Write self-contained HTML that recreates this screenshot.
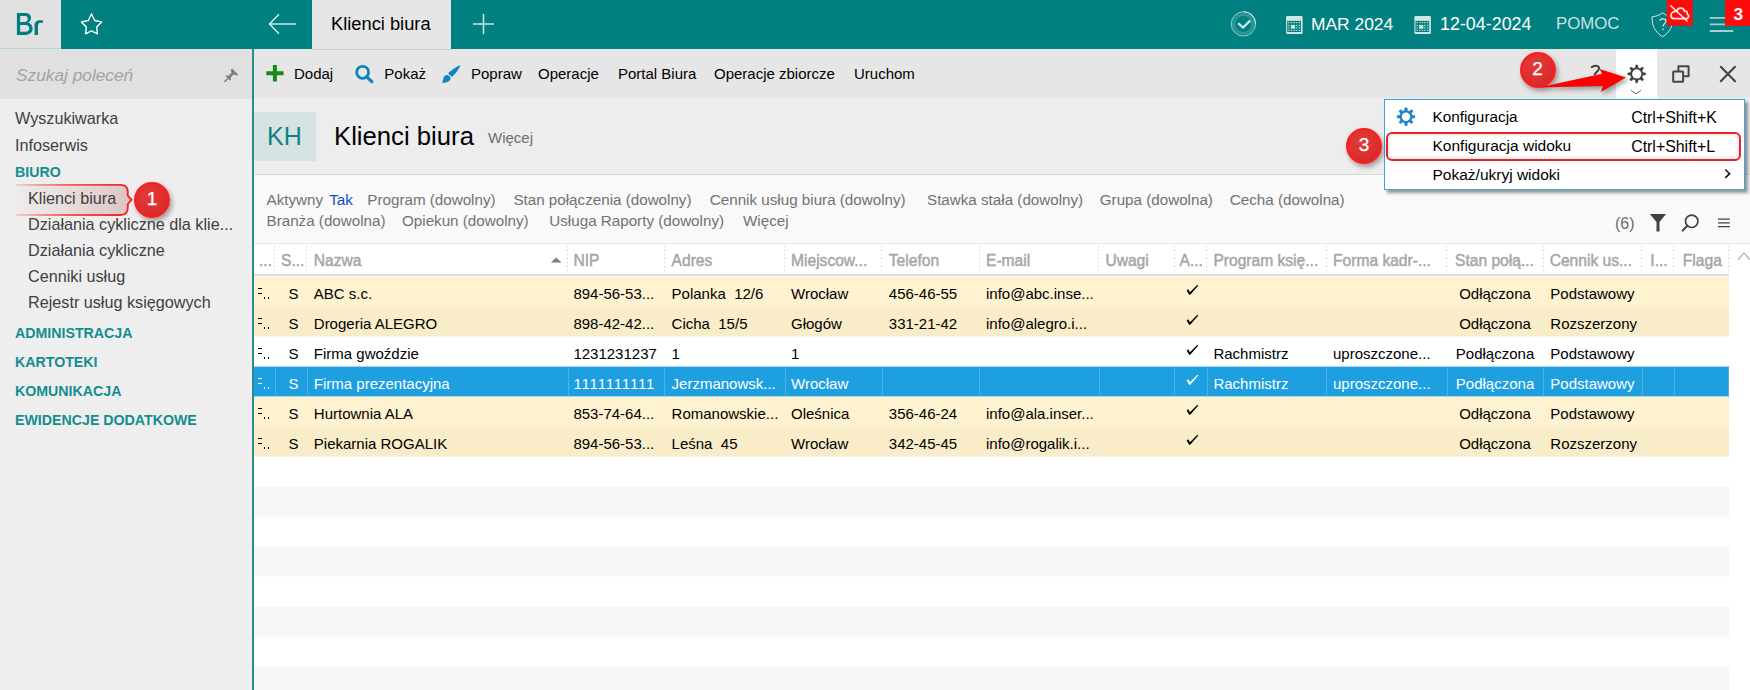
<!DOCTYPE html>
<html><head><meta charset="utf-8">
<style>
*{margin:0;padding:0;box-sizing:border-box}
html,body{width:1750px;height:690px;overflow:hidden;background:#fff;font-family:"Liberation Sans",sans-serif}
.a{position:absolute}
.t{position:absolute;white-space:nowrap;line-height:1}
svg{position:absolute;overflow:visible}
</style></head><body>
<div class="a" style="left:0;top:0;width:1750px;height:49px;background:#008080"></div>
<div class="a" style="left:0;top:0;width:61px;height:48px;background:#e1e1e1"></div>
<div class="a" style="left:0;top:48px;width:61px;height:1px;background:#b9d6d6"></div>
<div class="a" style="left:312px;top:0;width:139px;height:49px;background:#e6e6e6"></div>
<svg style="left:0;top:0" width="61" height="49"><path fill-rule="evenodd" fill="#007f80" d="M16.9,12.9 H25.3 C29.3,12.9 31,15.2 31,17.6 C31,20 29.9,21.6 28.2,22.6 C31,23.5 32.6,25.5 32.6,28.6 C32.6,32.5 29.8,34.9 25.6,34.9 H16.9 Z M20.15,16 H25 C27,16 27.8,17.1 27.8,18.8 C27.8,20.6 26.8,21.9 25,21.9 H20.15 Z M20.15,24.9 H25.6 C28,24.9 29.3,26.2 29.3,28.3 C29.3,30.6 28,31.8 25.6,31.8 H20.15 Z M34.5,34.9 V25 C34.5,22 36.8,20.2 40,20.2 L42,20.2 C42.8,20.2 43.1,20.7 43.1,21.5 C43.1,22.3 42.8,22.8 42,22.8 L40.5,22.8 C38.8,22.8 38,24 38,25.8 V34.9 Z"/></svg>
<svg style="left:0;top:0" width="1750" height="49">
  <polygon points="91.5,14 94.7,20.5 101.6,21.9 96.7,27 97.4,33.8 91.5,30.8 85.6,33.8 86.3,27 81.4,21.9 88.3,20.5" fill="none" stroke="#fff" stroke-width="1.4" stroke-linejoin="round"/>
  <path d="M279,14.3 L269.5,24 L279,33.7 M269.5,24 H296" fill="none" stroke="#cbe5e5" stroke-width="1.6"/>
  <path d="M473,24 H494 M483.5,14 V34.3" fill="none" stroke="#cbe5e5" stroke-width="1.5"/>
</svg>
<div class="t" style="left:331px;top:14.51px;font-size:18.3px;color:#000;">Klienci biura</div>
<div class="t" style="left:1311px;top:16.27px;font-size:17.4px;color:#ffffff;">MAR 2024</div>
<div class="t" style="left:1440px;top:15.85px;font-size:17.9px;color:#ffffff;">12-04-2024</div>
<div class="t" style="left:1556px;top:15.58px;font-size:16.8px;color:#c8e2e2;">POMOC</div>
<div class="a" style="left:0;top:49px;width:252px;height:641px;background:#eeeeee"></div>
<div class="a" style="left:0;top:49px;width:252px;height:50px;background:#e0e0e0"></div>
<div class="a" style="left:252px;top:49px;width:2px;height:641px;background:#2a8c8c"></div>
<div class="t" style="left:16px;top:67.36px;font-size:17.3px;color:#a3a3a3;font-style:italic">Szukaj poleceń</div>
<div class="t" style="left:15px;top:109.79px;font-size:16.2px;color:#404040;">Wyszukiwarka</div>
<div class="t" style="left:15px;top:136.79px;font-size:16.2px;color:#404040;">Infoserwis</div>
<div class="t" style="left:15px;top:165.48px;font-size:14.2px;color:#138e8f;font-weight:bold">BIURO</div>
<div class="t" style="left:28px;top:216.29px;font-size:16.2px;color:#404040;">Działania cykliczne dla klie...</div>
<div class="t" style="left:28px;top:242.29px;font-size:16.2px;color:#404040;">Działania cykliczne</div>
<div class="t" style="left:28px;top:268.29px;font-size:16.2px;color:#404040;">Cenniki usług</div>
<div class="t" style="left:28px;top:294.29px;font-size:16.2px;color:#404040;">Rejestr usług księgowych</div>
<div class="t" style="left:15px;top:326.48px;font-size:14.2px;color:#138e8f;font-weight:bold">ADMINISTRACJA</div>
<div class="t" style="left:15px;top:355.48px;font-size:14.2px;color:#138e8f;font-weight:bold">KARTOTEKI</div>
<div class="t" style="left:15px;top:383.98px;font-size:14.2px;color:#138e8f;font-weight:bold">KOMUNIKACJA</div>
<div class="t" style="left:15px;top:412.98px;font-size:14.2px;color:#138e8f;font-weight:bold">EWIDENCJE DODATKOWE</div>
<div class="a" style="left:254px;top:49px;width:1496px;height:49px;background:#e6e6e6"></div>
<div class="a" style="left:1616px;top:49px;width:41px;height:49px;background:#ffffff"></div>
<div class="a" style="left:312px;top:49px;width:139px;height:1px;background:#c6ccc8"></div>
<div class="t" style="left:294px;top:66.30px;font-size:15px;color:#000;">Dodaj</div>
<div class="t" style="left:384.3px;top:66.30px;font-size:15px;color:#000;">Pokaż</div>
<div class="t" style="left:471px;top:66.30px;font-size:15px;color:#000;">Popraw</div>
<div class="t" style="left:538px;top:66.30px;font-size:15px;color:#000;">Operacje</div>
<div class="t" style="left:618px;top:66.30px;font-size:15px;color:#000;">Portal Biura</div>
<div class="t" style="left:714px;top:66.30px;font-size:15px;color:#000;">Operacje zbiorcze</div>
<div class="t" style="left:854px;top:66.30px;font-size:15px;color:#000;">Uruchom</div>
<div class="a" style="left:254px;top:98px;width:1496px;height:76px;background:#ededed"></div>
<div class="a" style="left:254px;top:112px;width:62px;height:49px;background:#d6e3e4"></div>
<div class="a" style="left:254px;top:174px;width:1496px;height:1px;background:#d8d8d8"></div>
<div class="t" style="left:267px;top:123.84px;font-size:25px;color:#0e8283;">KH</div>
<div class="t" style="left:334px;top:124.04px;font-size:25.7px;color:#000;">Klienci biura</div>
<div class="t" style="left:488px;top:130.30px;font-size:15px;color:#6e6e6e;">Więcej</div>
<div class="a" style="left:254px;top:175px;width:1496px;height:68px;background:#f9f9f9"></div>
<div class="a" style="left:254px;top:243px;width:1496px;height:1px;background:#e6e6e6"></div>
<div class="t" style="left:266.5px;top:191.53px;font-size:15.2px;color:#727272;">Aktywny</div>
<div class="t" style="left:329.2px;top:191.53px;font-size:15.2px;color:#0c50c2;">Tak</div>
<div class="t" style="left:367.3px;top:191.53px;font-size:15.2px;color:#727272;">Program (dowolny)</div>
<div class="t" style="left:513.4px;top:191.53px;font-size:15.2px;color:#727272;">Stan połączenia (dowolny)</div>
<div class="t" style="left:709.8px;top:191.53px;font-size:15.2px;color:#727272;">Cennik usług biura (dowolny)</div>
<div class="t" style="left:927px;top:191.53px;font-size:15.2px;color:#727272;">Stawka stała (dowolny)</div>
<div class="t" style="left:1099.8px;top:191.53px;font-size:15.2px;color:#727272;">Grupa (dowolna)</div>
<div class="t" style="left:1229.8px;top:191.53px;font-size:15.2px;color:#727272;">Cecha (dowolna)</div>
<div class="t" style="left:266.5px;top:212.53px;font-size:15.2px;color:#727272;">Branża (dowolna)</div>
<div class="t" style="left:402px;top:212.53px;font-size:15.2px;color:#727272;">Opiekun (dowolny)</div>
<div class="t" style="left:549.3px;top:212.53px;font-size:15.2px;color:#727272;">Usługa Raporty (dowolny)</div>
<div class="t" style="left:743px;top:212.53px;font-size:15.2px;color:#727272;">Więcej</div>
<div class="t" style="left:1615px;top:215.96px;font-size:16px;color:#6b6b6b;">(6)</div>
<div class="a" style="left:254px;top:244px;width:1496px;height:446px;background:#ffffff"></div>
<div class="a" style="left:254px;top:274px;width:1475px;height:2px;background:#dedede"></div>
<svg style="left:0;top:0" width="1750" height="690"><rect x="254" y="276.6" width="1475" height="30" fill="#fff2d0"/><rect x="254" y="306.6" width="1475" height="30" fill="#f9ecc8"/><rect x="254" y="336.6" width="1475" height="30" fill="#ffffff"/><rect x="254" y="366.6" width="1475" height="30" fill="#1e9fe0"/><rect x="254" y="396.6" width="1475" height="30" fill="#fff2d0"/><rect x="254" y="426.6" width="1475" height="30" fill="#f9ecc8"/><rect x="254" y="486.6" width="1475" height="30" fill="#f7f7f7"/><rect x="254" y="546.6" width="1475" height="30" fill="#f7f7f7"/><rect x="254" y="606.6" width="1475" height="30" fill="#f7f7f7"/><rect x="254" y="666.6" width="1475" height="30" fill="#f7f7f7"/></svg>
<div class="a" style="left:274px;top:246px;width:1px;height:28px;background:repeating-linear-gradient(180deg,#c4c4c4 0,#c4c4c4 1px,transparent 1px,transparent 4px)"></div>
<div class="a" style="left:306px;top:246px;width:1px;height:28px;background:repeating-linear-gradient(180deg,#c4c4c4 0,#c4c4c4 1px,transparent 1px,transparent 4px)"></div>
<div class="a" style="left:567px;top:246px;width:1px;height:28px;background:repeating-linear-gradient(180deg,#c4c4c4 0,#c4c4c4 1px,transparent 1px,transparent 4px)"></div>
<div class="a" style="left:664px;top:246px;width:1px;height:28px;background:repeating-linear-gradient(180deg,#c4c4c4 0,#c4c4c4 1px,transparent 1px,transparent 4px)"></div>
<div class="a" style="left:784px;top:246px;width:1px;height:28px;background:repeating-linear-gradient(180deg,#c4c4c4 0,#c4c4c4 1px,transparent 1px,transparent 4px)"></div>
<div class="a" style="left:881px;top:246px;width:1px;height:28px;background:repeating-linear-gradient(180deg,#c4c4c4 0,#c4c4c4 1px,transparent 1px,transparent 4px)"></div>
<div class="a" style="left:979px;top:246px;width:1px;height:28px;background:repeating-linear-gradient(180deg,#c4c4c4 0,#c4c4c4 1px,transparent 1px,transparent 4px)"></div>
<div class="a" style="left:1098px;top:246px;width:1px;height:28px;background:repeating-linear-gradient(180deg,#c4c4c4 0,#c4c4c4 1px,transparent 1px,transparent 4px)"></div>
<div class="a" style="left:1174px;top:246px;width:1px;height:28px;background:repeating-linear-gradient(180deg,#c4c4c4 0,#c4c4c4 1px,transparent 1px,transparent 4px)"></div>
<div class="a" style="left:1206px;top:246px;width:1px;height:28px;background:repeating-linear-gradient(180deg,#c4c4c4 0,#c4c4c4 1px,transparent 1px,transparent 4px)"></div>
<div class="a" style="left:1326px;top:246px;width:1px;height:28px;background:repeating-linear-gradient(180deg,#c4c4c4 0,#c4c4c4 1px,transparent 1px,transparent 4px)"></div>
<div class="a" style="left:1446px;top:246px;width:1px;height:28px;background:repeating-linear-gradient(180deg,#c4c4c4 0,#c4c4c4 1px,transparent 1px,transparent 4px)"></div>
<div class="a" style="left:1543px;top:246px;width:1px;height:28px;background:repeating-linear-gradient(180deg,#c4c4c4 0,#c4c4c4 1px,transparent 1px,transparent 4px)"></div>
<div class="a" style="left:1641px;top:246px;width:1px;height:28px;background:repeating-linear-gradient(180deg,#c4c4c4 0,#c4c4c4 1px,transparent 1px,transparent 4px)"></div>
<div class="a" style="left:1673px;top:246px;width:1px;height:28px;background:repeating-linear-gradient(180deg,#c4c4c4 0,#c4c4c4 1px,transparent 1px,transparent 4px)"></div>
<div class="a" style="left:1728px;top:246px;width:1px;height:28px;background:repeating-linear-gradient(180deg,#c4c4c4 0,#c4c4c4 1px,transparent 1px,transparent 4px)"></div>
<svg style="left:0;top:0" width="1" height="1"><rect x="275" y="366.6" width="1" height="30" fill="#4cb2e8"/></svg>
<svg style="left:0;top:0" width="1" height="1"><rect x="307" y="366.6" width="1" height="30" fill="#4cb2e8"/></svg>
<svg style="left:0;top:0" width="1" height="1"><rect x="568" y="366.6" width="1" height="30" fill="#4cb2e8"/></svg>
<svg style="left:0;top:0" width="1" height="1"><rect x="664" y="366.6" width="1" height="30" fill="#4cb2e8"/></svg>
<svg style="left:0;top:0" width="1" height="1"><rect x="785" y="366.6" width="1" height="30" fill="#4cb2e8"/></svg>
<svg style="left:0;top:0" width="1" height="1"><rect x="882" y="366.6" width="1" height="30" fill="#4cb2e8"/></svg>
<svg style="left:0;top:0" width="1" height="1"><rect x="979" y="366.6" width="1" height="30" fill="#4cb2e8"/></svg>
<svg style="left:0;top:0" width="1" height="1"><rect x="1099" y="366.6" width="1" height="30" fill="#4cb2e8"/></svg>
<svg style="left:0;top:0" width="1" height="1"><rect x="1174" y="366.6" width="1" height="30" fill="#4cb2e8"/></svg>
<svg style="left:0;top:0" width="1" height="1"><rect x="1207" y="366.6" width="1" height="30" fill="#4cb2e8"/></svg>
<svg style="left:0;top:0" width="1" height="1"><rect x="1326" y="366.6" width="1" height="30" fill="#4cb2e8"/></svg>
<svg style="left:0;top:0" width="1" height="1"><rect x="1447" y="366.6" width="1" height="30" fill="#4cb2e8"/></svg>
<svg style="left:0;top:0" width="1" height="1"><rect x="1543" y="366.6" width="1" height="30" fill="#4cb2e8"/></svg>
<svg style="left:0;top:0" width="1" height="1"><rect x="1642" y="366.6" width="1" height="30" fill="#4cb2e8"/></svg>
<svg style="left:0;top:0" width="1" height="1"><rect x="1674" y="366.6" width="1" height="30" fill="#4cb2e8"/></svg>
<svg style="left:0;top:0" width="1" height="1"><rect x="1728" y="366.6" width="1" height="30" fill="#4cb2e8"/></svg>
<div class="t" style="left:259px;top:252.79px;font-size:15.6px;color:#a6a6a6;font-weight:normal;-webkit-text-stroke:0.45px #a6a6a6">...</div>
<div class="t" style="left:281px;top:252.79px;font-size:15.6px;color:#a6a6a6;font-weight:normal;-webkit-text-stroke:0.45px #a6a6a6">S...</div>
<div class="t" style="left:313.8px;top:252.79px;font-size:15.6px;color:#a6a6a6;font-weight:normal;-webkit-text-stroke:0.45px #a6a6a6">Nazwa</div>
<div class="t" style="left:573.4px;top:252.79px;font-size:15.6px;color:#a6a6a6;font-weight:normal;-webkit-text-stroke:0.45px #a6a6a6">NIP</div>
<div class="t" style="left:671.6px;top:252.79px;font-size:15.6px;color:#a6a6a6;font-weight:normal;-webkit-text-stroke:0.45px #a6a6a6">Adres</div>
<div class="t" style="left:791px;top:252.79px;font-size:15.6px;color:#a6a6a6;font-weight:normal;-webkit-text-stroke:0.45px #a6a6a6">Miejscow...</div>
<div class="t" style="left:888.8px;top:252.79px;font-size:15.6px;color:#a6a6a6;font-weight:normal;-webkit-text-stroke:0.45px #a6a6a6">Telefon</div>
<div class="t" style="left:986px;top:252.79px;font-size:15.6px;color:#a6a6a6;font-weight:normal;-webkit-text-stroke:0.45px #a6a6a6">E-mail</div>
<div class="t" style="left:1105.4px;top:252.79px;font-size:15.6px;color:#a6a6a6;font-weight:normal;-webkit-text-stroke:0.45px #a6a6a6">Uwagi</div>
<div class="t" style="left:1179.5px;top:252.79px;font-size:15.6px;color:#a6a6a6;font-weight:normal;-webkit-text-stroke:0.45px #a6a6a6">A...</div>
<div class="t" style="left:1213.4px;top:252.79px;font-size:15.6px;color:#a6a6a6;font-weight:normal;-webkit-text-stroke:0.45px #a6a6a6">Program księ...</div>
<div class="t" style="left:1333px;top:252.79px;font-size:15.6px;color:#a6a6a6;font-weight:normal;-webkit-text-stroke:0.45px #a6a6a6">Forma kadr-...</div>
<div class="t" style="left:1455px;top:252.79px;font-size:15.6px;color:#a6a6a6;font-weight:normal;-webkit-text-stroke:0.45px #a6a6a6">Stan połą...</div>
<div class="t" style="left:1549.7px;top:252.79px;font-size:15.6px;color:#a6a6a6;font-weight:normal;-webkit-text-stroke:0.45px #a6a6a6">Cennik us...</div>
<div class="t" style="left:1650.3px;top:252.79px;font-size:15.6px;color:#a6a6a6;font-weight:normal;-webkit-text-stroke:0.45px #a6a6a6">I...</div>
<div class="t" style="left:1682.8px;top:252.79px;font-size:15.6px;color:#a6a6a6;font-weight:normal;-webkit-text-stroke:0.45px #a6a6a6">Flaga</div>
<svg style="left:0;top:0" width="1" height="1"><polygon points="550.8,262.6 561.6,262.6 556.2,257.6" fill="#808080"/></svg>
<div class="t" style="left:288.6px;top:285.70px;font-size:15px;color:#000000;">S</div>
<div class="t" style="left:313.8px;top:285.70px;font-size:15px;color:#000000;">ABC s.c.</div>
<div class="t" style="left:573.4px;top:285.70px;font-size:15px;color:#000000;">894-56-53...</div>
<div class="t" style="left:671.6px;top:285.70px;font-size:15px;color:#000000;">Polanka&nbsp; 12/6</div>
<div class="t" style="left:791px;top:285.70px;font-size:15px;color:#000000;">Wrocław</div>
<div class="t" style="left:888.8px;top:285.70px;font-size:15px;color:#000000;">456-46-55</div>
<div class="t" style="left:986px;top:285.70px;font-size:15px;color:#000000;">info@abc.inse...</div>
<svg style="left:0;top:0" width="1" height="1"><path d="M1186.7,290.5 L1188.3,289.3 L1189.9,292.2 L1197.4,284.7 L1198.3,285.6 L1190.2,294.7 L1189.1,294.7 Z" transform="translate(0,0)" fill="#000000"/></svg>
<div class="t" style="left:1446.8px;width:96.5px;text-align:center;top:285.70px;font-size:15px;color:#000000">Odłączona</div>
<div class="t" style="left:1550.3px;top:285.70px;font-size:15px;color:#000000;">Podstawowy</div>
<div class="a" style="left:258px;top:288px;width:4px;height:1px;background:#000000"></div>
<div class="a" style="left:258px;top:293px;width:4px;height:1px;background:#000000"></div>
<div class="a" style="left:264px;top:297px;width:1px;height:1.5px;background:#000000"></div>
<div class="a" style="left:268px;top:297px;width:1px;height:1.5px;background:#000000"></div>
<div class="t" style="left:288.6px;top:315.70px;font-size:15px;color:#000000;">S</div>
<div class="t" style="left:313.8px;top:315.70px;font-size:15px;color:#000000;">Drogeria ALEGRO</div>
<div class="t" style="left:573.4px;top:315.70px;font-size:15px;color:#000000;">898-42-42...</div>
<div class="t" style="left:671.6px;top:315.70px;font-size:15px;color:#000000;">Cicha&nbsp; 15/5</div>
<div class="t" style="left:791px;top:315.70px;font-size:15px;color:#000000;">Głogów</div>
<div class="t" style="left:888.8px;top:315.70px;font-size:15px;color:#000000;">331-21-42</div>
<div class="t" style="left:986px;top:315.70px;font-size:15px;color:#000000;">info@alegro.i...</div>
<svg style="left:0;top:0" width="1" height="1"><path d="M1186.7,290.5 L1188.3,289.3 L1189.9,292.2 L1197.4,284.7 L1198.3,285.6 L1190.2,294.7 L1189.1,294.7 Z" transform="translate(0,30)" fill="#000000"/></svg>
<div class="t" style="left:1446.8px;width:96.5px;text-align:center;top:315.70px;font-size:15px;color:#000000">Odłączona</div>
<div class="t" style="left:1550.3px;top:315.70px;font-size:15px;color:#000000;">Rozszerzony</div>
<div class="a" style="left:258px;top:318px;width:4px;height:1px;background:#000000"></div>
<div class="a" style="left:258px;top:323px;width:4px;height:1px;background:#000000"></div>
<div class="a" style="left:264px;top:327px;width:1px;height:1.5px;background:#000000"></div>
<div class="a" style="left:268px;top:327px;width:1px;height:1.5px;background:#000000"></div>
<div class="t" style="left:288.6px;top:345.70px;font-size:15px;color:#000000;">S</div>
<div class="t" style="left:313.8px;top:345.70px;font-size:15px;color:#000000;">Firma gwoździe</div>
<div class="t" style="left:573.4px;top:345.70px;font-size:15px;color:#000000;">1231231237</div>
<div class="t" style="left:671.6px;top:345.70px;font-size:15px;color:#000000;">1</div>
<div class="t" style="left:791px;top:345.70px;font-size:15px;color:#000000;">1</div>
<svg style="left:0;top:0" width="1" height="1"><path d="M1186.7,290.5 L1188.3,289.3 L1189.9,292.2 L1197.4,284.7 L1198.3,285.6 L1190.2,294.7 L1189.1,294.7 Z" transform="translate(0,60)" fill="#000000"/></svg>
<div class="t" style="left:1213.4px;top:345.70px;font-size:15px;color:#000000;">Rachmistrz</div>
<div class="t" style="left:1333px;top:345.70px;font-size:15px;color:#000000;">uproszczone...</div>
<div class="t" style="left:1446.8px;width:96.5px;text-align:center;top:345.70px;font-size:15px;color:#000000">Podłączona</div>
<div class="t" style="left:1550.3px;top:345.70px;font-size:15px;color:#000000;">Podstawowy</div>
<div class="a" style="left:258px;top:348px;width:4px;height:1px;background:#000000"></div>
<div class="a" style="left:258px;top:353px;width:4px;height:1px;background:#000000"></div>
<div class="a" style="left:264px;top:357px;width:1px;height:1.5px;background:#000000"></div>
<div class="a" style="left:268px;top:357px;width:1px;height:1.5px;background:#000000"></div>
<div class="t" style="left:288.6px;top:375.70px;font-size:15px;color:#ffffff;">S</div>
<div class="t" style="left:313.8px;top:375.70px;font-size:15px;color:#ffffff;">Firma prezentacyjna</div>
<div class="t" style="left:573.4px;top:375.70px;font-size:15px;color:#ffffff;letter-spacing:0.85px">1111111111</div>
<div class="t" style="left:671.6px;top:375.70px;font-size:15px;color:#ffffff;">Jerzmanowsk...</div>
<div class="t" style="left:791px;top:375.70px;font-size:15px;color:#ffffff;">Wrocław</div>
<svg style="left:0;top:0" width="1" height="1"><path d="M1186.7,290.5 L1188.3,289.3 L1189.9,292.2 L1197.4,284.7 L1198.3,285.6 L1190.2,294.7 L1189.1,294.7 Z" transform="translate(0,90)" fill="#ffffff"/></svg>
<div class="t" style="left:1213.4px;top:375.70px;font-size:15px;color:#ffffff;">Rachmistrz</div>
<div class="t" style="left:1333px;top:375.70px;font-size:15px;color:#ffffff;">uproszczone...</div>
<div class="t" style="left:1446.8px;width:96.5px;text-align:center;top:375.70px;font-size:15px;color:#ffffff">Podłączona</div>
<div class="t" style="left:1550.3px;top:375.70px;font-size:15px;color:#ffffff;">Podstawowy</div>
<div class="a" style="left:258px;top:378px;width:4px;height:1px;background:#ffffff"></div>
<div class="a" style="left:258px;top:383px;width:4px;height:1px;background:#ffffff"></div>
<div class="a" style="left:264px;top:387px;width:1px;height:1.5px;background:#ffffff"></div>
<div class="a" style="left:268px;top:387px;width:1px;height:1.5px;background:#ffffff"></div>
<div class="t" style="left:288.6px;top:405.70px;font-size:15px;color:#000000;">S</div>
<div class="t" style="left:313.8px;top:405.70px;font-size:15px;color:#000000;">Hurtownia ALA</div>
<div class="t" style="left:573.4px;top:405.70px;font-size:15px;color:#000000;">853-74-64...</div>
<div class="t" style="left:671.6px;top:405.70px;font-size:15px;color:#000000;">Romanowskie...</div>
<div class="t" style="left:791px;top:405.70px;font-size:15px;color:#000000;">Oleśnica</div>
<div class="t" style="left:888.8px;top:405.70px;font-size:15px;color:#000000;">356-46-24</div>
<div class="t" style="left:986px;top:405.70px;font-size:15px;color:#000000;">info@ala.inser...</div>
<svg style="left:0;top:0" width="1" height="1"><path d="M1186.7,290.5 L1188.3,289.3 L1189.9,292.2 L1197.4,284.7 L1198.3,285.6 L1190.2,294.7 L1189.1,294.7 Z" transform="translate(0,120)" fill="#000000"/></svg>
<div class="t" style="left:1446.8px;width:96.5px;text-align:center;top:405.70px;font-size:15px;color:#000000">Odłączona</div>
<div class="t" style="left:1550.3px;top:405.70px;font-size:15px;color:#000000;">Podstawowy</div>
<div class="a" style="left:258px;top:408px;width:4px;height:1px;background:#000000"></div>
<div class="a" style="left:258px;top:413px;width:4px;height:1px;background:#000000"></div>
<div class="a" style="left:264px;top:417px;width:1px;height:1.5px;background:#000000"></div>
<div class="a" style="left:268px;top:417px;width:1px;height:1.5px;background:#000000"></div>
<div class="t" style="left:288.6px;top:435.70px;font-size:15px;color:#000000;">S</div>
<div class="t" style="left:313.8px;top:435.70px;font-size:15px;color:#000000;">Piekarnia ROGALIK</div>
<div class="t" style="left:573.4px;top:435.70px;font-size:15px;color:#000000;">894-56-53...</div>
<div class="t" style="left:671.6px;top:435.70px;font-size:15px;color:#000000;">Leśna&nbsp; 45</div>
<div class="t" style="left:791px;top:435.70px;font-size:15px;color:#000000;">Wrocław</div>
<div class="t" style="left:888.8px;top:435.70px;font-size:15px;color:#000000;">342-45-45</div>
<div class="t" style="left:986px;top:435.70px;font-size:15px;color:#000000;">info@rogalik.i...</div>
<svg style="left:0;top:0" width="1" height="1"><path d="M1186.7,290.5 L1188.3,289.3 L1189.9,292.2 L1197.4,284.7 L1198.3,285.6 L1190.2,294.7 L1189.1,294.7 Z" transform="translate(0,150)" fill="#000000"/></svg>
<div class="t" style="left:1446.8px;width:96.5px;text-align:center;top:435.70px;font-size:15px;color:#000000">Odłączona</div>
<div class="t" style="left:1550.3px;top:435.70px;font-size:15px;color:#000000;">Rozszerzony</div>
<div class="a" style="left:258px;top:438px;width:4px;height:1px;background:#000000"></div>
<div class="a" style="left:258px;top:443px;width:4px;height:1px;background:#000000"></div>
<div class="a" style="left:264px;top:447px;width:1px;height:1.5px;background:#000000"></div>
<div class="a" style="left:268px;top:447px;width:1px;height:1.5px;background:#000000"></div>
<svg style="left:0;top:0" width="1750" height="690">
  <!-- toolbar plus -->
  <path d="M266.3,73.2 H283.5 M274.9,65 V81.5" stroke="#168a16" stroke-width="4"/>
  <!-- search -->
  <circle cx="362.6" cy="72.3" r="6" fill="none" stroke="#0f85bd" stroke-width="2.8"/>
  <path d="M366.5,76.6 L371.8,81.6" stroke="#0f85bd" stroke-width="3.2" stroke-linecap="round"/>
  <!-- brush -->
  <path d="M460.4,65 C457.5,66 451.5,70 448.1,73.4 L452,77.1 C455.8,73.2 459.8,68.2 460.4,65 Z" fill="#0f85bd"/>
  <path d="M448.2,75.2 C445.8,74.6 443.6,76.2 443.3,78.6 C443.1,80.6 442.8,81.9 441.8,82.8 C444.6,82.9 448.1,82.4 450,80.2 C451.2,78.8 450.6,76.2 448.2,75.2 Z" fill="#0f85bd"/>
  <!-- pin -->
  <path d="M232,68.5 L238.3,74.8 L236.6,75.6 L233.6,74.6 L230.6,77.6 L231,80 L230,80.6 L225.6,76.2 L226.6,75.3 L228.6,75.7 L231.6,72.7 L230.8,70 Z" fill="#7d7d7d"/>
  <path d="M228,78.5 L224.3,82" stroke="#7d7d7d" stroke-width="1.4"/>
  <!-- check circle -->
  <circle cx="1243.4" cy="23.9" r="10.4" fill="none" stroke="#2a9292" stroke-width="3.8"/>
  <circle cx="1243.4" cy="23.9" r="12.2" fill="none" stroke="#8cc6c6" stroke-width="1"/>
  <circle cx="1243.4" cy="23.9" r="8.5" fill="none" stroke="#4aa3a3" stroke-width="0.6"/>
  <path d="M1243.4,11.7 A12.2,12.2 0 0 1 1255.6,23.9" fill="none" stroke="#b5dede" stroke-width="1.1"/>
  <path d="M1238.3,23.2 L1243,27.5 L1250.2,20.6" fill="none" stroke="#d8eeee" stroke-width="2.2"/>
  <!-- calendars -->
  <rect x="1286.1" y="16.1" width="16.5" height="17.8" rx="1" fill="#cfe6e6"/>
  <rect x="1287.1999999999998" y="20.9" width="13.7" height="11.1" fill="#0b7c7c"/>
  <rect x="1288.2" y="22.0" width="1.4" height="1.2" fill="#b8dcdc"/>
  <rect x="1288.2" y="24.8" width="1.4" height="1.2" fill="#b8dcdc"/>
  <rect x="1288.2" y="27.2" width="1.4" height="1.2" fill="#b8dcdc"/>
  <rect x="1288.2" y="29.8" width="1.4" height="1.2" fill="#b8dcdc"/>
  <rect x="1290.8" y="22.0" width="1.4" height="1.2" fill="#b8dcdc"/>
  <rect x="1290.8" y="24.8" width="1.4" height="1.2" fill="#b8dcdc"/>
  <rect x="1290.8" y="27.2" width="1.4" height="1.2" fill="#b8dcdc"/>
  <rect x="1290.8" y="29.8" width="1.4" height="1.2" fill="#b8dcdc"/>
  <rect x="1293.4" y="22.0" width="1.4" height="1.2" fill="#b8dcdc"/>
  <rect x="1293.4" y="24.8" width="1.4" height="1.2" fill="#b8dcdc"/>
  <rect x="1293.4" y="27.2" width="1.4" height="1.2" fill="#b8dcdc"/>
  <rect x="1293.4" y="29.8" width="1.4" height="1.2" fill="#b8dcdc"/>
  <rect x="1295.8" y="22.0" width="1.4" height="1.2" fill="#b8dcdc"/>
  <rect x="1295.8" y="24.8" width="1.4" height="1.2" fill="#b8dcdc"/>
  <rect x="1295.8" y="27.2" width="1.4" height="1.2" fill="#b8dcdc"/>
  <rect x="1295.8" y="29.8" width="1.4" height="1.2" fill="#b8dcdc"/>
  <rect x="1298.6" y="22.0" width="1.4" height="1.2" fill="#b8dcdc"/>
  <rect x="1298.6" y="24.8" width="1.4" height="1.2" fill="#b8dcdc"/>
  <rect x="1298.6" y="27.2" width="1.4" height="1.2" fill="#b8dcdc"/>
  <rect x="1298.6" y="29.8" width="1.4" height="1.2" fill="#b8dcdc"/>
  <rect x="1291.1" y="25" width="3.9" height="3.7" fill="#d2eaea"/>
  <rect x="1414.3999999999999" y="16.1" width="16.5" height="17.8" rx="1" fill="#cfe6e6"/>
  <rect x="1415.4999999999998" y="20.9" width="13.7" height="11.1" fill="#0b7c7c"/>
  <rect x="1416.5" y="22.0" width="1.4" height="1.2" fill="#b8dcdc"/>
  <rect x="1416.5" y="24.8" width="1.4" height="1.2" fill="#b8dcdc"/>
  <rect x="1416.5" y="27.2" width="1.4" height="1.2" fill="#b8dcdc"/>
  <rect x="1416.5" y="29.8" width="1.4" height="1.2" fill="#b8dcdc"/>
  <rect x="1419.1" y="22.0" width="1.4" height="1.2" fill="#b8dcdc"/>
  <rect x="1419.1" y="24.8" width="1.4" height="1.2" fill="#b8dcdc"/>
  <rect x="1419.1" y="27.2" width="1.4" height="1.2" fill="#b8dcdc"/>
  <rect x="1419.1" y="29.8" width="1.4" height="1.2" fill="#b8dcdc"/>
  <rect x="1421.7" y="22.0" width="1.4" height="1.2" fill="#b8dcdc"/>
  <rect x="1421.7" y="24.8" width="1.4" height="1.2" fill="#b8dcdc"/>
  <rect x="1421.7" y="27.2" width="1.4" height="1.2" fill="#b8dcdc"/>
  <rect x="1421.7" y="29.8" width="1.4" height="1.2" fill="#b8dcdc"/>
  <rect x="1424.1" y="22.0" width="1.4" height="1.2" fill="#b8dcdc"/>
  <rect x="1424.1" y="24.8" width="1.4" height="1.2" fill="#b8dcdc"/>
  <rect x="1424.1" y="27.2" width="1.4" height="1.2" fill="#b8dcdc"/>
  <rect x="1424.1" y="29.8" width="1.4" height="1.2" fill="#b8dcdc"/>
  <rect x="1426.9" y="22.0" width="1.4" height="1.2" fill="#b8dcdc"/>
  <rect x="1426.9" y="24.8" width="1.4" height="1.2" fill="#b8dcdc"/>
  <rect x="1426.9" y="27.2" width="1.4" height="1.2" fill="#b8dcdc"/>
  <rect x="1426.9" y="29.8" width="1.4" height="1.2" fill="#b8dcdc"/>
  <rect x="1419.4" y="25" width="3.9" height="3.7" fill="#d2eaea"/>
  <!-- shield -->
  <path d="M1662.6,12.8 C1659,15.5 1655.5,16.5 1652,16.8 C1652,26 1655,32 1662.6,36.8 C1670,32 1673.3,26 1673.3,16.8 C1669.5,16.5 1666,15.5 1662.6,12.8 Z" fill="none" stroke="#cfe6e6" stroke-width="1"/>
  <path d="M1660,21 C1660,18 1666,18 1666,21.2 C1666,23.5 1663,23.5 1663,26.5" fill="none" stroke="#cfe6e6" stroke-width="1.3"/>
  <circle cx="1663" cy="29.4" r="0.8" fill="#cfe6e6"/>
  <!-- red boxes -->
  <rect x="1666.7" y="0" width="26" height="25.7" fill="#ff0b0b"/>
  <rect x="1725" y="0" width="25" height="25.7" fill="#ff0b0b"/>
  <path d="M1674,18.6 L1686,18.6 C1689,18.6 1689.5,15 1687.2,14 C1687.5,11 1685.5,10.8 1684.5,11.2 C1683.5,7 1677.5,7.2 1676.8,11.5 C1673.5,11 1670.5,13 1671,16 C1671.3,17.8 1672.5,18.6 1674,18.6 Z" fill="none" stroke="#ffe6e6" stroke-width="1.7"/>
  <path d="M1670.5,5.5 L1687.5,21.5" stroke="#ffe6e6" stroke-width="1.7"/>
  <!-- hamburger top -->
  <path d="M1709.8,17.9 H1733.2 M1709.8,24.4 H1733.2 M1709.8,31 H1733.2" stroke="#a6cfcf" stroke-width="1.8"/>
  <rect x="1725" y="0" width="25" height="25.7" fill="#ff0b0b"/>
  <!-- toolbar right icons -->
  <path d="M1599,69.3 C1599.5,65.6 1595.5,64.5 1591,67.5" fill="none" stroke="#3c3c3c" stroke-width="2"/>
  <path d="M1599,69.3 C1598.5,71 1595.5,72 1594.6,75" fill="none" stroke="#3c3c3c" stroke-width="2"/>
  <rect x="1673.2" y="71.4" width="9.9" height="10.4" rx="0.6" fill="none" stroke="#454545" stroke-width="2"/>
  <path d="M1678.4,71.4 V66.2 H1688.6 V76.3 H1684.1" fill="none" stroke="#454545" stroke-width="2" stroke-linejoin="round"/>
  <path d="M1720.8,66.8 L1735,81.2 M1735,66.8 L1720.8,81.2" stroke="#454545" stroke-width="2.1" stroke-linecap="round"/>
  <path d="M1631,90.3 L1636,93.8 L1641,90.3" fill="none" stroke="#555" stroke-width="0.9"/>
  <!-- filter icons -->
  <path d="M1649.8,214 H1666 L1659.5,222 V231.5 H1656.5 V222 Z" fill="#404040"/>
  <circle cx="1691.7" cy="221.3" r="6.2" fill="none" stroke="#404040" stroke-width="1.6"/>
  <path d="M1687.4,225.7 L1682.6,230.6" stroke="#404040" stroke-width="2" stroke-linecap="round"/>
  <path d="M1718,219.1 H1729.8 M1718,222.9 H1729.8 M1718,226.7 H1729.8" stroke="#404040" stroke-width="1.3"/>
  <!-- scroll chevron -->
  <path d="M1738.2,259.5 L1744,253 L1749.8,259.5" fill="none" stroke="#b5b5b5" stroke-width="1.4"/>
</svg>
<svg style="left:0;top:0" width="1750" height="690"><polygon points="1635.28,67.76 1635.76,64.95 1637.64,64.95 1638.12,67.76 1640.04,68.56 1642.36,66.91 1643.69,68.24 1642.04,70.56 1642.84,72.48 1645.65,72.96 1645.65,74.84 1642.84,75.32 1642.04,77.24 1643.69,79.56 1642.36,80.89 1640.04,79.24 1638.12,80.04 1637.64,82.85 1635.76,82.85 1635.28,80.04 1633.36,79.24 1631.04,80.89 1629.71,79.56 1631.36,77.24 1630.56,75.32 1627.75,74.84 1627.75,72.96 1630.56,72.48 1631.36,70.56 1629.71,68.24 1631.04,66.91 1633.36,68.56" fill="#3f3f3f" stroke="#3f3f3f" stroke-width="0.4" stroke-linejoin="round"/><circle cx="1636.7" cy="73.9" r="4.6" fill="#fff"/></svg>
<div class="t" style="left:1733.5px;top:6.16px;font-size:17.3px;color:#ffffff;font-weight:bold">3</div>
<div class="a" style="left:1384px;top:99px;width:361px;height:91px;background:#fff;border:1px solid #3ea2de;box-shadow:3px 3px 3px rgba(0,0,0,0.4)"></div>
<svg style="left:0;top:0" width="1750" height="690"><polygon points="1404.48,110.59 1404.90,107.77 1407.10,107.77 1407.52,110.59 1409.24,111.30 1411.54,109.61 1413.09,111.16 1411.40,113.46 1412.11,115.18 1414.93,115.60 1414.93,117.80 1412.11,118.22 1411.40,119.94 1413.09,122.24 1411.54,123.79 1409.24,122.10 1407.52,122.81 1407.10,125.63 1404.90,125.63 1404.48,122.81 1402.76,122.10 1400.46,123.79 1398.91,122.24 1400.60,119.94 1399.89,118.22 1397.07,117.80 1397.07,115.60 1399.89,115.18 1400.60,113.46 1398.91,111.16 1400.46,109.61 1402.76,111.30" fill="#1a86c3" stroke="#1a86c3" stroke-width="0.4" stroke-linejoin="round"/><circle cx="1406" cy="116.7" r="4.2" fill="#fff"/></svg>
<div class="t" style="left:1432.5px;top:108.65px;font-size:15.3px;color:#000;">Konfiguracja</div>
<div class="t" style="left:1631.2px;top:109.54px;font-size:15.9px;color:#000;">Ctrl+Shift+K</div>
<div class="t" style="left:1432.5px;top:137.78px;font-size:15.5px;color:#000;">Konfiguracja widoku</div>
<div class="t" style="left:1631.2px;top:138.84px;font-size:15.9px;color:#000;">Ctrl+Shift+L</div>
<div class="t" style="left:1432.5px;top:166.58px;font-size:15.5px;color:#000;">Pokaż/ukryj widoki</div>
<svg style="left:0;top:0" width="1750" height="690"><path d="M1725.3,169.5 L1729.6,173.7 L1725.3,177.9" fill="none" stroke="#202020" stroke-width="1.7"/></svg>
<div class="a" style="left:1386px;top:132px;width:355px;height:29px;border:2px solid #e8232b;border-radius:6px;box-shadow:inset 0 0 4px rgba(0,0,0,0.18)"></div>
<svg style="left:0;top:0" width="1750" height="690"><defs>
<linearGradient id="cfill" gradientUnits="userSpaceOnUse" x1="16" y1="0" x2="128" y2="0"><stop offset="0" stop-color="#e6d2d2" stop-opacity="0.1"/><stop offset="0.6" stop-color="#e3cccc" stop-opacity="0.7"/><stop offset="1" stop-color="#dcc2c2" stop-opacity="0.95"/></linearGradient>
<linearGradient id="cstroke" gradientUnits="userSpaceOnUse" x1="16" y1="0" x2="128" y2="0"><stop offset="0" stop-color="#f03030" stop-opacity="0.15"/><stop offset="0.45" stop-color="#f03030" stop-opacity="0.75"/><stop offset="1" stop-color="#ee2222" stop-opacity="1"/></linearGradient>
</defs>
<path d="M16,184.8 H120.5 Q127.8,184.8 127.8,192 V195.6 L131.6,199.8 L127.8,204 V207.8 Q127.8,215 120.5,215 H16" fill="url(#cfill)" stroke="url(#cstroke)" stroke-width="1.8"/>
</svg>
<div class="t" style="left:28px;top:190.29px;font-size:16.2px;color:#404040;">Klienci biura</div>
<div class="a" style="left:134.2px;top:181.5px;width:36px;height:36px;border-radius:50%;background:radial-gradient(circle at 40% 35%,#e33b3b,#d32626);border:2px solid #ff1c1c;box-shadow:2px 3px 5px rgba(0,0,0,0.35)"></div>
<div class="t" style="left:146.79999999999998px;top:189.02px;font-size:19px;color:#ffffff;-webkit-text-stroke:0.25px #fff">1</div>
<div class="a" style="left:1519.6px;top:51.8px;width:36px;height:36px;border-radius:50%;background:radial-gradient(circle at 40% 35%,#e33b3b,#d32626);border:2px solid #ff1c1c;box-shadow:2px 3px 5px rgba(0,0,0,0.35)"></div>
<div class="t" style="left:1532.1999999999998px;top:59.32px;font-size:19px;color:#ffffff;-webkit-text-stroke:0.25px #fff">2</div>
<div class="a" style="left:1346.1px;top:127.5px;width:36px;height:36px;border-radius:50%;background:radial-gradient(circle at 40% 35%,#e33b3b,#d32626);border:2px solid #ff1c1c;box-shadow:2px 3px 5px rgba(0,0,0,0.35)"></div>
<div class="t" style="left:1358.6999999999998px;top:135.02px;font-size:19px;color:#ffffff;-webkit-text-stroke:0.25px #fff">3</div>
<svg style="left:0;top:0" width="1750" height="690"><defs><filter id="sh" x="-20%" y="-50%" width="140%" height="200%"><feGaussianBlur stdDeviation="2.5"/></filter></defs><polygon points="1540,90 1604,76 1601.5,71 1629,80 1603,95 1605,89" fill="rgba(0,0,0,0.35)" filter="url(#sh)"/><polygon points="1538.7,87.6 1602.2,73.7 1599.6,68.9 1626,77.6 1600.9,92 1603,85.9" fill="#ff0000"/></svg>
</body></html>
